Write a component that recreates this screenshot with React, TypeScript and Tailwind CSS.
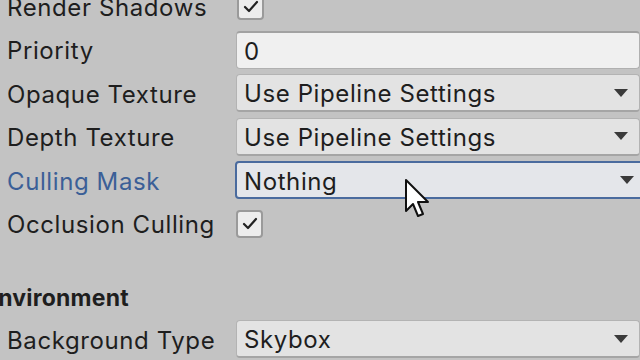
import React from 'react';

function Arrow() {
  return (
    <svg width="14" height="8" viewBox="0 0 14 8" className="shrink-0">
      <path d="M0 0 H14 L7 8 Z" fill="#3a3a3a" />
    </svg>
  );
}

function Check() {
  return (
    <div className="w-[27px] h-[28px] rounded-[4px] border-2 border-[#9a9a9a] bg-[#ededed] flex items-center justify-center">
      <svg width="16" height="13" viewBox="0 0 16 13">
        <path d="M2 7 L6 11 L14 2" fill="none" stroke="#222" strokeWidth="2.2" strokeLinecap="round" strokeLinejoin="round" />
      </svg>
    </div>
  );
}

function Dropdown({ value, focused }: { value: string; focused?: boolean }) {
  return (
    <div
      className={
        'w-[412px] h-[38px] flex items-center justify-between pl-[7px] pr-[11px] rounded-[4px] ' +
        (focused
          ? 'border-2 border-[#4a6b9e] bg-[#e4e6ea]'
          : 'border border-[#b3b3b3] border-b-2 border-b-[#a5a5a5] bg-[#e3e3e3]')
      }
    >
      <span className="pt-[3px]">{value}</span>
      <Arrow />
    </div>
  );
}

function Row({ label, blue, children }: { label: string; blue?: boolean; children: React.ReactNode }) {
  return (
    <div className="h-[43.5px] flex items-center">
      <div className={'w-[236px] shrink-0 pl-[7px] pt-[3px] whitespace-nowrap ' + (blue ? 'text-[#3b5f97]' : '')}>{label}</div>
      {children}
    </div>
  );
}

export default function App() {
  return (
    <div
      className="relative w-[640px] h-[360px] overflow-hidden bg-[#c3c3c3] text-[#1e1e1e] text-[24px] tracking-[0.6px]"
      style={{ fontFamily: 'Inter, "Noto Sans", sans-serif' }}
    >
      <div className="mt-[-15.5px] flex flex-col">
        <Row label="Render Shadows">
          <div className="pl-[1px]"><Check /></div>
        </Row>
        <Row label="Priority">
          <div className="w-[412px] h-[38px] flex items-center pl-[7px] pt-[3px] rounded-[4px] border border-[#b0b0b0] border-t-2 border-t-[#a2a2a2] bg-[#f0f0f0]">
            0
          </div>
        </Row>
        <Row label="Opaque Texture">
          <Dropdown value="Use Pipeline Settings" />
        </Row>
        <Row label="Depth Texture">
          <Dropdown value="Use Pipeline Settings" />
        </Row>
        <Row label="Culling Mask" blue>
          <div className="ml-[-1px]"><Dropdown value="Nothing" focused /></div>
        </Row>
        <Row label="Occlusion Culling">
          <Check />
        </Row>
        <div className="h-[34px]" />
        <div className="h-[38px] flex items-center ml-[-16px] font-bold text-[23px] tracking-[0.2px] whitespace-nowrap">Environment</div>
        <Row label="Background Type">
          <Dropdown value="Skybox" />
        </Row>
      </div>
      <svg className="absolute left-[404px] top-[178px]" width="30" height="44" viewBox="0 0 30 44">
        <path
          d="M2 2 L2 33 L9 26 L14 38 L19 36 L14 24 L24 24 Z"
          fill="#fff"
          stroke="#111"
          strokeWidth="2"
          strokeLinejoin="round"
        />
      </svg>
    </div>
  );
}
